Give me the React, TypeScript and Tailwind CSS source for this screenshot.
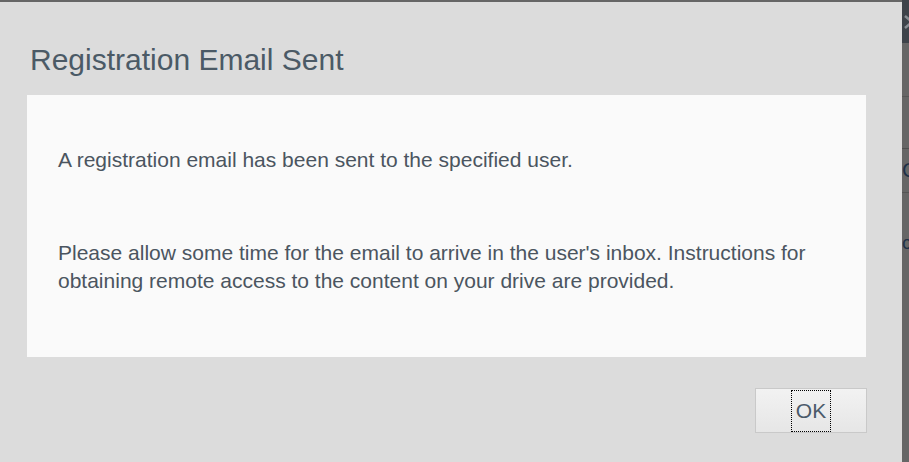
export default function App() {
  return (
    <div className="flex h-[462px] w-[909px] overflow-hidden bg-[#666666] font-['Liberation_Sans',Arial,sans-serif]">
      {/* dialog */}
      <div className="mt-[2px] flex h-[460px] w-[902px] shrink-0 flex-col bg-[#dcdcdc]">
        <h1 className="ml-[30px] mt-[39px] text-[30px] leading-[38px] text-[#4b5a66]">
          Registration Email Sent
        </h1>
        <div className="ml-[27px] mt-[16px] h-[262px] w-[839px] bg-[#fafafa] pl-[31px] pr-[30px] pt-[51px] text-[21px] leading-[28px] text-[#4b5560]">
          <p>A registration email has been sent to the specified user.</p>
          <p className="mt-[65px]">
            Please allow some time for the email to arrive in the user's inbox. Instructions for
            obtaining remote access to the content on your drive are provided.
          </p>
        </div>
        <div className="mt-[31px] flex w-[867px] justify-end">
          <button
            type="button"
            className="flex h-[45px] w-[112px] items-center justify-center border border-[#c9c9c9] bg-gradient-to-b from-[#f2f2f2] to-[#e6e6e6] text-[21px] text-[#4b5a6a]"
          >
            <span className="flex h-[40px] w-[38px] items-center justify-center outline-1 outline-dotted outline-black">
              OK
            </span>
          </button>
        </div>
      </div>
      {/* page behind overlay */}
      <div className="flex flex-1 flex-col overflow-hidden text-[#1f3047]">
        <div className="flex h-[43px] items-center bg-[#3e434a] pl-[1px]">
          <svg width="12" height="16" viewBox="0 0 12 16" className="shrink-0">
            <path d="M2 2l7 6-7 6" fill="none" stroke="#8a8f95" strokeWidth="2.5" />
          </svg>
        </div>
        <div className="h-[54px] border-b border-[#575757]" />
        <div className="h-[52px] border-b border-[#4f4f4f]" />
        <div className="h-[44px] border-b border-[#555] pt-[9px] text-[21px] leading-[24px]">C</div>
        <div className="pt-[38px] text-[19px] leading-[24px]">co</div>
      </div>
    </div>
  );
}
